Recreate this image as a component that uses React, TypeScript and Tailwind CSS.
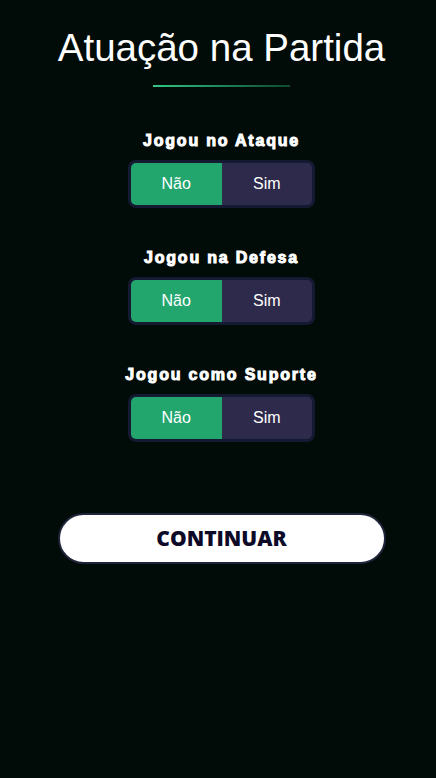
import React, { useState } from "react";

function Toggle({ label }: { label: string }) {
  const [v, setV] = useState(false);
  return (
    <div className="flex flex-col items-center">
      <div className="text-[16px] leading-[24px] font-bold text-white tracking-[1.8px] [-webkit-text-stroke:1px_white]" style={{ fontFamily: '"Liberation Sans", Arial, sans-serif' }}>
        {label}
      </div>
      <div className="mt-[7px] flex w-[187px] h-[48px] rounded-[8px] bg-[#151a33] p-[3px]">
        <button
          onClick={() => setV(false)}
          className={`flex-1 rounded-l-[5px] text-[16px] text-white ${!v ? "bg-[#22a66e]" : "bg-[#2e2a4b]"}`}
        >
          Não
        </button>
        <button
          onClick={() => setV(true)}
          className={`flex-1 rounded-r-[5px] text-[16px] text-white ${v ? "bg-[#22a66e]" : "bg-[#2e2a4b]"}`}
        >
          Sim
        </button>
      </div>
    </div>
  );
}

export default function App() {
  return (
    <div className="w-[436px] h-[778px] bg-[#010b07] flex flex-col items-center pl-[7px]" style={{ fontFamily: '"Liberation Sans", Arial, sans-serif' }}>
      <h1 className="mt-[26px] text-[38.5px] leading-[44px] text-white font-normal">Atuação na Partida</h1>
      <div className="mt-[15px] w-[137px] h-[2px] bg-gradient-to-r from-[#2fc986] to-[#0f4a30]" />
      <div className="mt-[42px] flex flex-col gap-[38px]">
        <Toggle label="Jogou no Ataque" />
        <Toggle label="Jogou na Defesa" />
        <Toggle label="Jogou como Suporte" />
      </div>
      <button
        className="mt-[71px] w-[328px] h-[51px] rounded-full bg-white border-2 border-[#20243a] text-[21px] font-extrabold text-[#0d0a28]"
        style={{ fontFamily: '"Open Sans", "Noto Sans", sans-serif' }}
      >
        CONTINUAR
      </button>
    </div>
  );
}
